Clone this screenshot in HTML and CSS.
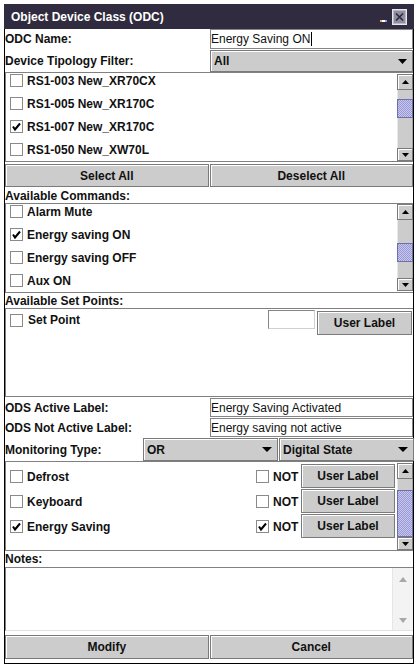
FILE: index.html
```html
<!DOCTYPE html>
<html>
<head>
<meta charset="utf-8">
<link rel="stylesheet" href="styles.css">
</head>
<body>
<div class="window">
  <div class="titlebar">
    <span class="title">Object Device Class (ODC)</span>
    <span class="tb-min"></span>
    <span class="tb-close"><svg width="15" height="16" viewBox="0 0 15 16"><rect x="0.5" y="0.5" width="14" height="15" fill="#8e8ea0" stroke="#e6e6ee"/><rect x="1.5" y="1.5" width="12" height="13" fill="none" stroke="#b8b8c8"/><path d="M4 4.5L11 11.5M11 4.5L4 11.5" stroke="#2a2a38" stroke-width="1.6"/></svg></span>
  </div>

  <div class="row row-name">
    <label class="lbl">ODC Name:</label>
    <div class="input">Energy Saving ON<span class="caret"></span></div>
  </div>
  <div class="row row-filter">
    <label class="lbl">Device Tipology Filter:</label>
    <div class="combo"><span>All</span><svg class="carr" width="9" height="5" viewBox="0 0 9 5"><path d="M0 0H9L4.5 5Z" fill="#000"/></svg></div>
  </div>

  <div class="list">
    <div class="items">
      <div class="item"><span class="cb"></span>RS1-003 New_XR70CX</div>
      <div class="item"><span class="cb"></span>RS1-005 New_XR170C</div>
      <div class="item"><span class="cb on"><svg width="11" height="11" viewBox="0 0 11 11"><path d="M2 5.5L4 8.5L9 2.5" fill="none" stroke="#000" stroke-width="2"/></svg></span>RS1-007 New_XR170C</div>
      <div class="item"><span class="cb"></span>RS1-050 New_XW70L</div>
    </div>
    <div class="sb sb-dev">
      <div class="sb-btn"><svg width="7" height="4" viewBox="0 0 7 4"><path d="M3.5 0L7 4H0Z" fill="#000"/></svg></div>
      <div class="sb-track"><div class="sb-thumb"></div></div>
      <div class="sb-btn sb-down"><svg width="7" height="4" viewBox="0 0 7 4"><path d="M0 0H7L3.5 4Z" fill="#000"/></svg></div>
    </div>
  </div>

  <div class="btn-row">
    <div class="btn">Select All</div>
    <div class="btn">Deselect All</div>
  </div>

  <div class="section">Available Commands:</div>
  <div class="list">
    <div class="items">
      <div class="item"><span class="cb"></span>Alarm Mute</div>
      <div class="item"><span class="cb on"><svg width="11" height="11" viewBox="0 0 11 11"><path d="M2 5.5L4 8.5L9 2.5" fill="none" stroke="#000" stroke-width="2"/></svg></span>Energy saving ON</div>
      <div class="item"><span class="cb"></span>Energy saving OFF</div>
      <div class="item"><span class="cb"></span>Aux ON</div>
    </div>
    <div class="sb sb-cmd">
      <div class="sb-btn"><svg width="7" height="4" viewBox="0 0 7 4"><path d="M3.5 0L7 4H0Z" fill="#000"/></svg></div>
      <div class="sb-track"><div class="sb-thumb"></div></div>
      <div class="sb-btn sb-down"><svg width="7" height="4" viewBox="0 0 7 4"><path d="M0 0H7L3.5 4Z" fill="#000"/></svg></div>
    </div>
  </div>

  <div class="section sec-sp">Available Set Points:</div>
  <div class="setpoints">
    <div class="sp-row">
      <div class="sp-check"><span class="cb"></span>Set Point</div>
      <div class="sp-input"></div>
      <div class="btn sp-btn">User Label</div>
    </div>
  </div>

  <div class="row row-lbl">
    <label class="lbl">ODS Active Label:</label>
    <div class="input small">Energy Saving Activated</div>
  </div>
  <div class="row row-lbl">
    <label class="lbl">ODS Not Active Label:</label>
    <div class="input small">Energy saving not active</div>
  </div>
  <div class="row-mon">
    <label class="lbl">Monitoring Type:</label>
    <div class="combo"><span>OR</span><svg class="carr" width="10" height="5" viewBox="0 0 10 5"><path d="M0 0H10L5 5Z" fill="#000"/></svg></div>
    <div class="combo"><span>Digital State</span><svg class="carr" width="10" height="5" viewBox="0 0 10 5"><path d="M0 0H10L5 5Z" fill="#000"/></svg></div>
  </div>

  <div class="list">
    <div class="mon-items">
      <div class="mon-item">
        <div class="mon-name"><span class="cb"></span>Defrost</div>
        <div class="mon-not"><span class="cb"></span>NOT</div>
        <div class="btn mon-btn">User Label</div>
      </div>
      <div class="mon-item">
        <div class="mon-name"><span class="cb"></span>Keyboard</div>
        <div class="mon-not"><span class="cb"></span>NOT</div>
        <div class="btn mon-btn">User Label</div>
      </div>
      <div class="mon-item">
        <div class="mon-name"><span class="cb on"><svg width="11" height="11" viewBox="0 0 11 11"><path d="M2 5.5L4 8.5L9 2.5" fill="none" stroke="#000" stroke-width="2"/></svg></span>Energy Saving</div>
        <div class="mon-not"><span class="cb on"><svg width="11" height="11" viewBox="0 0 11 11"><path d="M2 5.5L4 8.5L9 2.5" fill="none" stroke="#000" stroke-width="2"/></svg></span>NOT</div>
        <div class="btn mon-btn">User Label</div>
      </div>
    </div>
    <div class="sb sb-mon">
      <div class="sb-btn"><svg width="7" height="4" viewBox="0 0 7 4"><path d="M3.5 0L7 4H0Z" fill="#000"/></svg></div>
      <div class="sb-track"><div class="sb-thumb"></div></div>
      <div class="sb-btn sb-down"><svg width="7" height="4" viewBox="0 0 7 4"><path d="M0 0H7L3.5 4Z" fill="#000"/></svg></div>
    </div>
  </div>

  <div class="section sec-notes">Notes:</div>
  <div class="notes">
    <div class="notes-text"></div>
    <div class="notes-sb">
      <svg width="8" height="5" viewBox="0 0 8 5"><path d="M4 0L8 5H0Z" fill="#a8a8a8"/></svg>
      <svg width="8" height="5" viewBox="0 0 8 5"><path d="M0 0H8L4 5Z" fill="#a8a8a8"/></svg>
    </div>
  </div>

  <div class="btn-row btn-bottom">
    <div class="btn">Modify</div>
    <div class="btn">Cancel</div>
  </div>
</div>
</body>
</html>
```

FILE: styles.css
```css
* { box-sizing: border-box; }

body {
  margin: 0;
  background: #fff;
  font-family: "Liberation Sans", Arial, sans-serif;
  font-size: 12px;
  color: #111;
}

.window {
  margin: 4px 0 0 4px;
  width: 410px;
  border: 1px solid #000;
  border-top: none;
  padding-bottom: 4px;
}

.titlebar {
  height: 25px;
  margin: 0 -1px;
  background: #302b3e;
  color: #fff;
  font-weight: bold;
  display: flex;
  align-items: center;
  padding: 0 7px 0 7px;
}
.title { flex: 1; }
.tb-min {
  align-self: flex-end;
  width: 7px;
  height: 2px;
  margin: 0 5px 7px 0;
  background: linear-gradient(90deg, #f0a860 0 2px, #fff 2px 5px, #8a9cff 5px);
}
.tb-close { display: flex; }

.lbl { font-weight: bold; white-space: nowrap; }

.row {
  display: grid;
  grid-template-columns: 205px 203px;
  align-items: center;
}
.row-name { height: 20px; }
.row-name .input { height: 20px; }
.row-filter { height: 23px; align-items: start; }
.row-filter .lbl { line-height: 25px; }
.row-filter .combo { margin-top: 1px; height: 22px; }

.input {
  border: 1px solid #858585;
  background: #fff;
  font-weight: normal;
  padding-left: 0;
  display: flex;
  align-items: center;
  white-space: nowrap;
  overflow: hidden;
}
.caret {
  display: inline-block;
  width: 1px;
  height: 14px;
  background: #000;
  margin-left: 1px;
}
.row-lbl { height: 20px; align-items: start; }
.row-lbl .lbl { line-height: 22px; }
.row-lbl .input { height: 19px; margin-top: 1px; }

.combo {
  background: #cccccc;
  border: 1px solid #7a7a7a;
  box-shadow: inset 1px 1px #fff;
  font-weight: bold;
  display: flex;
  align-items: center;
  justify-content: space-between;
  padding: 0 5px 0 3px;
}

.list {
  height: 90px;
  border-top: 1px solid #808080;
  border-bottom: 1px solid #808080;
  border-left: 1px solid #808080;
  display: flex;
  overflow: hidden;
  background: #fff;
}
.items { flex: 1; margin-top: -4px; }
.item {
  height: 23px;
  display: flex;
  align-items: center;
  gap: 4px;
  padding-left: 4px;
  font-weight: bold;
  white-space: nowrap;
}

.cb {
  flex: none;
  width: 13px;
  height: 13px;
  border: 1px solid #8a8a8a;
  background: #fff;
  display: inline-flex;
  align-items: center;
  justify-content: center;
}

.sb {
  flex: none;
  width: 16px;
  height: 87px;
  margin: 1px 0 0 0;
  display: flex;
  flex-direction: column;
}
.sb-cmd { margin-top: 0; }
.sb-btn {
  flex: none;
  height: 16px;
  background: #cccccc;
  border: 1px solid #7a7a7a;
  box-shadow: inset 1px 1px #fff;
  display: flex;
  align-items: center;
  justify-content: center;
}
.sb-down { height: 13px; }
.sb-track {
  flex: 1;
  background: #cccccc;
  border-left: 1px solid #e8e8e8;
  border-right: 1px solid #a0a0a0;
}
.sb-thumb {
  height: 19px;
  margin: 9px -1px 0 -1px;
  border: 1px solid #6e6ea8;
  background: repeating-conic-gradient(#c6c6f2 0 25%, #9a9ad0 0 50%) 0 0 / 2px 2px;
}
.sb-cmd .sb-thumb { margin-top: 23px; }
.sb-mon .sb-thumb { margin-top: 11px; height: 47px; }

.btn {
  background: #cccccc;
  border: 1px solid #7a7a7a;
  box-shadow: inset 1px 1px #fff;
  font-weight: bold;
  display: flex;
  align-items: center;
  justify-content: center;
  white-space: nowrap;
}
.btn-row {
  display: flex;
  gap: 1px;
  height: 23px;
  margin-top: 2px;
}
.btn-row .btn { flex: 1; }

.section {
  height: 16px;
  font-weight: bold;
  line-height: 18px;
}
.sec-sp { height: 15px; line-height: 16px; }
.sec-notes { line-height: 17px; }

.setpoints {
  height: 89px;
  border-top: 1px solid #808080;
  border-bottom: 1px solid #808080;
  border-left: 1px solid #808080;
  padding: 1px 1px 0 0;
}
.sp-row { display: flex; align-items: flex-start; }
.sp-check {
  flex: 1;
  height: 20px;
  display: flex;
  align-items: center;
  gap: 5px;
  padding-left: 4px;
  font-weight: bold;
}
.sp-input {
  width: 47px;
  height: 19px;
  border: 1px solid #858585;
  border-right-color: #d0d0d0;
  border-bottom-color: #d0d0d0;
  background: #fff;
}
.sp-btn {
  width: 95px;
  height: 24px;
  margin: 1px 0 0 2px;
}

.row-mon {
  display: grid;
  grid-template-columns: 137px 135px 135px;
  column-gap: 1px;
  height: 24px;
  align-items: start;
}
.row-mon .lbl { line-height: 26px; }
.row-mon .combo { height: 23px; margin-top: 1px; padding-right: 5px; padding-left: 3px; }

.mon-items { flex: 1; padding-top: 2px; }
.mon-item {
  height: 25px;
  display: flex;
  align-items: center;
  font-weight: bold;
}
.mon-name {
  flex: 1;
  display: flex;
  align-items: center;
  gap: 4px;
  padding-left: 4px;
}
.mon-not {
  display: flex;
  align-items: center;
  gap: 4px;
  width: 45px;
}
.mon-btn {
  width: 94px;
  height: 24px;
  margin-right: 2px;
  align-self: flex-start;
}

.notes {
  height: 64px;
  display: flex;
  border: 1px solid #808080;
  border-right: none;
  border-bottom-color: #e2e2e2;
}
.notes-text { flex: 1; background: #fff; }
.notes-sb {
  width: 21px;
  background: #f3f3f3;
  border-left: 1px solid #e6e6e6;
  display: flex;
  flex-direction: column;
  align-items: center;
  justify-content: space-between;
  padding: 9px 0 7px;
}

.btn-bottom { height: 24px; margin-top: 4px; }
```
